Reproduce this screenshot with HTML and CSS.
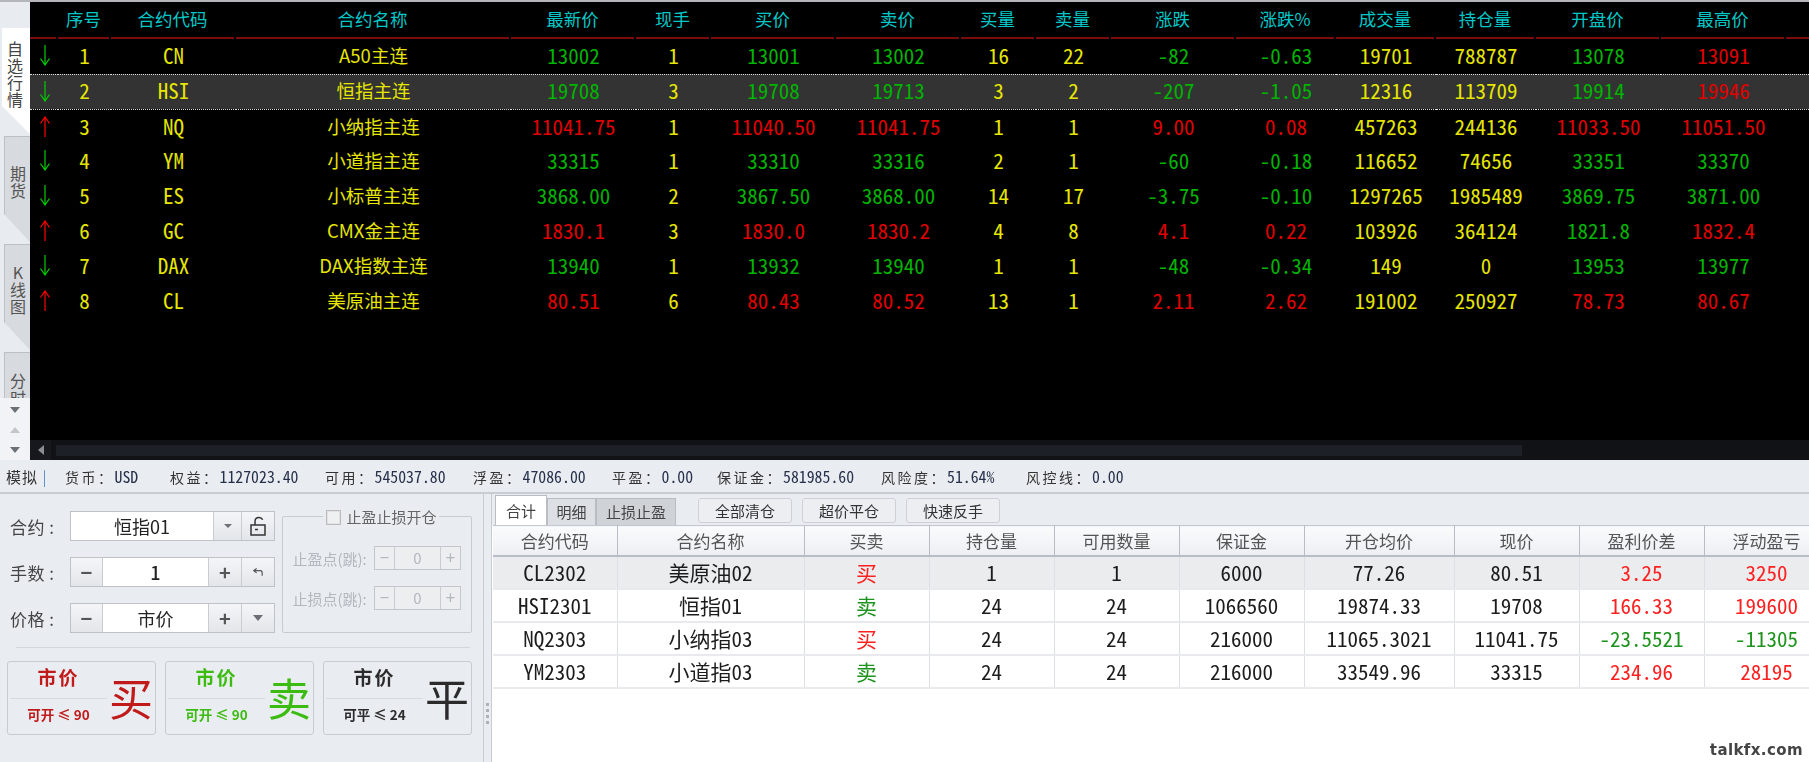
FILE: index.html
```html
<!DOCTYPE html>
<html lang="zh-CN">
<head>
<meta charset="utf-8">
<title>行情交易</title>
<link rel="stylesheet" href="styles.css">
</head>
<body>
<svg class="defs" width="0" height="0" aria-hidden="true">
  <symbol id="down" viewBox="0 0 12 21"><path d="M6 0v20M1.500 13.500l4.500 6.500 4.500-6.500" fill="none" stroke="currentColor" stroke-width="1.200"/></symbol>
  <symbol id="up" viewBox="0 0 12 21"><path d="M6 21V1M1.500 7.500L6 1l4.500 6.500" fill="none" stroke="currentColor" stroke-width="1.200"/></symbol>
</svg>
<div class="app">
  <section class="market">
    <nav class="side">
      <div class="side-tabs">
        <div class="tab active"><span>自选行情</span></div>
        <div class="tab"><span>期货</span></div>
        <div class="tab"><span>K线图</span></div>
        <div class="tab"><span>分时图</span></div>
      </div>
      <div class="side-arrows">
        <i class="tri"></i>
        <i class="tri up"></i>
        <i class="tri"></i>
      </div>
    </nav>
    <div class="quotes">
      <div class="quotes-view">
        <table class="qt">
          <colgroup>
            <col class="w28"><col class="w53"><col class="w125"><col class="w275"><col class="w125"><col class="w75"><col class="w125"><col class="w125"><col class="w75"><col class="w75"><col class="w125"><col class="w100"><col class="w100"><col class="w100"><col class="w125"><col class="w125"><col class="w125">
          </colgroup>
          <thead>
            <tr>
              <th><div></div></th><th><div>序号</div></th><th><div>合约代码</div></th><th><div>合约名称</div></th><th><div>最新价</div></th><th><div>现手</div></th><th><div>买价</div></th><th><div>卖价</div></th><th><div>买量</div></th><th><div>卖量</div></th><th><div>涨跌</div></th><th><div>涨跌%</div></th><th><div>成交量</div></th><th><div>持仓量</div></th><th><div>开盘价</div></th><th><div>最高价</div></th><th><div></div></th>
            </tr>
          </thead>
          <tbody>
            <tr><td class="g"><svg class="arr"><use href="#down"/></svg></td><td>1</td><td>CN</td><td class="nm">A50主连</td><td class="g">13002</td><td>1</td><td class="g">13001</td><td class="g">13002</td><td>16</td><td>22</td><td class="g">-82</td><td class="g">-0.63</td><td>19701</td><td>788787</td><td class="g">13078</td><td class="r">13091</td><td></td></tr>
            <tr class="sel"><td class="g"><svg class="arr"><use href="#down"/></svg></td><td>2</td><td>HSI</td><td class="nm">恒指主连</td><td class="g">19708</td><td>3</td><td class="g">19708</td><td class="g">19713</td><td>3</td><td>2</td><td class="g">-207</td><td class="g">-1.05</td><td>12316</td><td>113709</td><td class="g">19914</td><td class="r">19946</td><td></td></tr>
            <tr><td class="r"><svg class="arr"><use href="#up"/></svg></td><td>3</td><td>NQ</td><td class="nm">小纳指主连</td><td class="r">11041.75</td><td>1</td><td class="r">11040.50</td><td class="r">11041.75</td><td>1</td><td>1</td><td class="r">9.00</td><td class="r">0.08</td><td>457263</td><td>244136</td><td class="r">11033.50</td><td class="r">11051.50</td><td></td></tr>
            <tr><td class="g"><svg class="arr"><use href="#down"/></svg></td><td>4</td><td>YM</td><td class="nm">小道指主连</td><td class="g">33315</td><td>1</td><td class="g">33310</td><td class="g">33316</td><td>2</td><td>1</td><td class="g">-60</td><td class="g">-0.18</td><td>116652</td><td>74656</td><td class="g">33351</td><td class="g">33370</td><td></td></tr>
            <tr><td class="g"><svg class="arr"><use href="#down"/></svg></td><td>5</td><td>ES</td><td class="nm">小标普主连</td><td class="g">3868.00</td><td>2</td><td class="g">3867.50</td><td class="g">3868.00</td><td>14</td><td>17</td><td class="g">-3.75</td><td class="g">-0.10</td><td>1297265</td><td>1985489</td><td class="g">3869.75</td><td class="g">3871.00</td><td></td></tr>
            <tr><td class="r"><svg class="arr"><use href="#up"/></svg></td><td>6</td><td>GC</td><td class="nm">CMX金主连</td><td class="r">1830.1</td><td>3</td><td class="r">1830.0</td><td class="r">1830.2</td><td>4</td><td>8</td><td class="r">4.1</td><td class="r">0.22</td><td>103926</td><td>364124</td><td class="g">1821.8</td><td class="r">1832.4</td><td></td></tr>
            <tr><td class="g"><svg class="arr"><use href="#down"/></svg></td><td>7</td><td>DAX</td><td class="nm">DAX指数主连</td><td class="g">13940</td><td>1</td><td class="g">13932</td><td class="g">13940</td><td>1</td><td>1</td><td class="g">-48</td><td class="g">-0.34</td><td>149</td><td>0</td><td class="g">13953</td><td class="g">13977</td><td></td></tr>
            <tr><td class="r"><svg class="arr"><use href="#up"/></svg></td><td>8</td><td>CL</td><td class="nm">美原油主连</td><td class="r">80.51</td><td>6</td><td class="r">80.43</td><td class="r">80.52</td><td>13</td><td>1</td><td class="r">2.11</td><td class="r">2.62</td><td>191002</td><td>250927</td><td class="r">78.73</td><td class="r">80.67</td><td></td></tr>
          </tbody>
        </table>
      </div>
      <div class="hscroll">
        <div class="hs-btn"><i class="tri-left"></i></div>
        <div class="hs-track"><div class="hs-thumb"></div></div>
      </div>
    </div>
  </section>

  <div class="status">
    <span class="mode">模拟 <b>|</b></span>
    <span class="stat s-cur">货币：<em>USD</em></span>
    <span class="stat s-eq">权益：<em>1127023.40</em></span>
    <span class="stat s-av">可用：<em>545037.80</em></span>
    <span class="stat s-fl">浮盈：<em>47086.00</em></span>
    <span class="stat s-cl">平盈：<em>0.00</em></span>
    <span class="stat s-mg">保证金：<em>581985.60</em></span>
    <span class="stat s-rk">风险度：<em>51.64%</em></span>
    <span class="stat">风控线：<em>0.00</em></span>
  </div>

  <section class="lower">
    <aside class="order">
      <div class="order-top">
        <div class="form">
          <div class="frow">
            <label>合约 :</label>
            <div class="ctl">
              <div class="field f-name">恒指01</div>
              <div class="cbtn c28"><i class="tri small"></i></div>
              <div class="cbtn c33">
                <svg class="lock" viewBox="0 0 18 20"><path d="M2 9h14v10H2z M6 9V5.500C6 3 7.700 1.500 10 1.500c1.700 0 3 .8 3.700 2.300" fill="none" stroke="#333" stroke-width="1.500"/><path d="M6 13.500h3" stroke="#333" stroke-width="1.500"/></svg>
              </div>
            </div>
          </div>
          <div class="frow">
            <label>手数 :</label>
            <div class="ctl">
              <div class="cbtn c32 sign">−</div>
              <div class="field f-val strong">1</div>
              <div class="cbtn c33 sign">+</div>
              <div class="cbtn c33">
                <svg class="undo" viewBox="0 0 12 10"><path d="M4 1L1 3.500 4 6M1 3.500h7c1.500 0 2 1 2 2.500v3" fill="none" stroke="#555" stroke-width="1.300"/></svg>
              </div>
            </div>
          </div>
          <div class="frow">
            <label>价格 :</label>
            <div class="ctl">
              <div class="cbtn c32 sign">−</div>
              <div class="field f-val">市价</div>
              <div class="cbtn c33 sign">+</div>
              <div class="cbtn c33"><i class="tri"></i></div>
            </div>
          </div>
        </div>
        <div class="group">
          <div class="legend"><i class="check"></i>止盈止损开仓</div>
          <div class="grow">
            <span>止盈点(跳):</span>
            <div class="spin"><b>−</b><u>0</u><b>+</b></div>
          </div>
          <div class="grow">
            <span>止损点(跳):</span>
            <div class="spin"><b>−</b><u>0</u><b>+</b></div>
          </div>
        </div>
      </div>
      <hr class="rule">
      <div class="trades">
        <button class="trade t-buy" type="button">
          <span class="t-info"><strong>市价</strong><small>可开 ≤ 90</small></span><span class="t-big">买</span>
        </button>
        <button class="trade t-sell" type="button">
          <span class="t-info"><strong>市价</strong><small>可开 ≤ 90</small></span><span class="t-big">卖</span>
        </button>
        <button class="trade t-flat" type="button">
          <span class="t-info"><strong>市价</strong><small>可平 ≤ 24</small></span><span class="t-big">平</span>
        </button>
      </div>
    </aside>
    <div class="splitter"><i></i><i></i><i></i><i></i></div>
    <div class="positions">
      <div class="toolbar">
        <div class="ptabs">
          <span class="ptab on">合计</span>
          <span class="ptab">明细</span>
          <span class="ptab">止损止盈</span>
        </div>
        <div class="tools">
          <button class="tool" type="button">全部清仓</button>
          <button class="tool" type="button">超价平仓</button>
          <button class="tool" type="button">快速反手</button>
        </div>
      </div>
      <div class="pt-wrap">
        <table class="pt">
          <colgroup>
            <col class="w124"><col class="w187"><col class="w125"><col class="w125"><col class="w125"><col class="w125"><col class="w150"><col class="w125"><col class="w125"><col class="w125">
          </colgroup>
          <thead>
            <tr><th>合约代码</th><th>合约名称</th><th>买卖</th><th>持仓量</th><th>可用数量</th><th>保证金</th><th>开仓均价</th><th>现价</th><th>盈利价差</th><th>浮动盈亏</th></tr>
          </thead>
          <tbody>
            <tr class="cur"><td>CL2302</td><td>美原油02</td><td class="up">买</td><td>1</td><td>1</td><td>6000</td><td>77.26</td><td>80.51</td><td class="up">3.25</td><td class="up">3250</td></tr>
            <tr><td>HSI2301</td><td>恒指01</td><td class="dn">卖</td><td>24</td><td>24</td><td>1066560</td><td>19874.33</td><td>19708</td><td class="up">166.33</td><td class="up">199600</td></tr>
            <tr><td>NQ2303</td><td>小纳指03</td><td class="up">买</td><td>24</td><td>24</td><td>216000</td><td>11065.3021</td><td>11041.75</td><td class="dn">-23.5521</td><td class="dn">-11305</td></tr>
            <tr><td>YM2303</td><td>小道指03</td><td class="dn">卖</td><td>24</td><td>24</td><td>216000</td><td>33549.96</td><td>33315</td><td class="up">234.96</td><td class="up">28195</td></tr>
          </tbody>
        </table>
        <div class="mark">talkfx.com</div>
      </div>
    </div>
  </section>
</div>
</body>
</html>
```

FILE: styles.css
```css
* { box-sizing: border-box; }
html, body { margin: 0; height: 100%; }
body {
  font-family: "Noto Sans CJK SC", "Noto Sans", sans-serif;
  background: #e9ecf0;
  color: #222;
  overflow: hidden;
}
.defs { position: absolute; }
.app { width: 1809px; height: 762px; display: flex; flex-direction: column; overflow: hidden; filter: blur(.35px); }

/* market */
.market { height: 460px; display: flex; background: #000; }
.side {
  width: 30px;
  flex: none;
  background: #e8ebef;
  display: flex;
  flex-direction: column;
  border-top: 2px solid #b4b6ba;
}
.side-tabs {
  height: 396px;
  padding-top: 26px;
  overflow: hidden;
  display: flex;
  flex-direction: column;
  gap: 2px;
  flex: none;
}
.tab {
  flex: none;
  height: 106px;
  margin-left: 4px;
  background: #d7dade;
  border-left: 1px solid #bcbfc5;
  border-top: 1px solid #bcbfc5;
  color: #555;
  font-size: 16px;
  line-height: 1;
  padding: 0 0 14px 5px;
  display: flex;
  align-items: center;
  clip-path: polygon(0 0, 100% 0, 100% 100%, 0 78px);
}
.tab span {
  display: block;
  writing-mode: vertical-rl;
  text-orientation: upright;
  letter-spacing: 1px;
}
.tab.active {
  margin-left: 2px;
  background: #fff;
  border: 0;
  color: #444;
  padding: 0 0 12px 5px;
}
.side-arrows {
  flex: 1;
  background: #f1f3f6;
  display: flex;
  flex-direction: column;
  align-items: center;
  justify-content: space-around;
  padding: 2px 0 0;
}
.tri {
  display: block;
  width: 0;
  height: 0;
  border-left: 5px solid transparent;
  border-right: 5px solid transparent;
  border-top: 6px solid #6b6f76;
}
.tri.up { border-top: 0; border-bottom: 6px solid #c3c6cb; }
.tri.small { border-left-width: 4px; border-right-width: 4px; border-top-width: 4px; }

.quotes { flex: 1; min-width: 0; display: flex; flex-direction: column; }
.quotes-view { height: 440px; overflow: hidden; border-top: 2px solid #b4b6ba; }
.qt { border-collapse: collapse; table-layout: fixed; width: 1781px; color: #e6e600; }
.w28 { width: 28px; } .w53 { width: 53px; } .w75 { width: 75px; } .w100 { width: 100px; }
.w124 { width: 124px; } .w125 { width: 125px; } .w150 { width: 150px; } .w187 { width: 187px; } .w275 { width: 275px; }
.qt th { padding: 0; font-weight: 400; }
.qt th div {
  height: 37px;
  margin-right: 2px;
  border-bottom: 2px solid #7a0c0c;
  color: #00c8c8;
  font-size: 17.500px;
  line-height: 34px;
  text-align: center;
}
.qt td {
  height: 35px;
  padding: 0;
  font-family: "Noto Sans Mono CJK SC", "DejaVu Sans Mono", monospace;
  font-size: 21px;
  line-height: 32px;
  text-align: center;
  vertical-align: top;
  white-space: nowrap;
}
.qt td.nm { font-family: "Noto Sans CJK SC", sans-serif; font-size: 18.500px; line-height: 33px; }
.qt .g { color: #00b400; }
.qt .r { color: #e00000; }
.qt .sel td { background: #333; border-top: 1px dotted #ddd; border-bottom: 1px dotted #ddd; line-height: 31px; }
.arr { display: block; width: 12px; height: 21px; margin: 6px 0 0 9px; }
.qt td:first-child.g .arr { color: #00d000; }
.qt td:first-child.r .arr { color: #ff0000; }

.hscroll { height: 20px; display: flex; background: #101216; }
.hs-btn { width: 21px; background: #16181d; display: flex; align-items: center; justify-content: center; }
.tri-left {
  display: block;
  width: 0;
  height: 0;
  border-top: 5px solid transparent;
  border-bottom: 5px solid transparent;
  border-right: 6px solid #8a8d93;
}
.hs-track { flex: 1; padding: 5px 0 4px 5px; }
.hs-thumb { width: 1466px; height: 11px; background: #1e2028; }

/* status */
.status {
  height: 34px;
  flex: none;
  display: flex;
  align-items: center;
  padding-left: 6px;
  font-size: 14px;
  color: #333;
  background: #e9ecf0;
  border-bottom: 2px solid #c9cdd3;
  white-space: nowrap;
}
.mode { width: 59px; font-size: 15px; letter-spacing: 1px; }
.mode b { font-weight: 400; color: #5b8fc4; }
.stat { letter-spacing: 2.500px; }
.stat em { font-family: "Noto Sans Mono CJK SC", "DejaVu Sans Mono", monospace; font-size: 15.800px; font-style: normal; color: #26304a; letter-spacing: 0; }
.s-cur { width: 105px; }
.s-eq { width: 155px; }
.s-av { width: 148px; }
.s-fl { width: 139px; }
.s-cl { width: 105px; }
.s-mg { width: 164px; }
.s-rk { width: 145px; }

/* lower */
.lower { flex: 1; min-height: 0; display: flex; }
.order { width: 484px; flex: none; padding: 17px 11px 0 7px; border-right: 1px solid #c9cdd3; }
.order-top { display: flex; height: 122px; }
.form { width: 276px; display: flex; flex-direction: column; gap: 16px; padding-left: 3px; }
.frow { display: flex; align-items: center; height: 30px; }
.frow label { width: 60px; font-size: 17px; color: #444; letter-spacing: .5px; }
.ctl {
  width: 205px;
  height: 30px;
  display: flex;
  border: 1px solid #bfc3c9;
  background: #fff;
}
.field { display: flex; align-items: center; justify-content: center; font-size: 18px; color: #222; }
.f-name { flex: 1; }
.f-val { flex: 1; }
.strong { font-weight: 500; }
.cbtn {
  display: flex;
  align-items: center;
  justify-content: center;
  background: linear-gradient(#f4f5f7, #e3e6ea);
  border-left: 1px solid #c9cdd2;
  color: #555;
}
.c28 { width: 28px; }
.c32 { width: 32px; border-left: 0; border-right: 1px solid #c9cdd2; }
.c33 { width: 33px; }
.sign { font-size: 20px; font-weight: 700; line-height: 1; }
.lock { width: 18px; height: 20px; }
.undo { width: 11px; height: 10px; }

.group {
  position: relative;
  width: 190px;
  height: 117px;
  margin-top: 5px;
  border: 1px solid #c8ccd2;
  border-radius: 2px;
  padding: 29px 10px 0 9px;
  display: flex;
  flex-direction: column;
  gap: 16px;
}
.legend {
  position: absolute;
  top: -10px;
  left: 40px;
  display: flex;
  align-items: center;
  gap: 5px;
  padding: 0 3px;
  background: #e9ecf0;
  font-size: 15px;
  line-height: 20px;
  color: #666;
}
.check { width: 15px; height: 15px; border: 1px solid #bbb; background: #eef0f2; box-shadow: inset 0 0 0 1px #e0e2e6; }
.grow { display: flex; align-items: center; justify-content: space-between; height: 24px; font-size: 15px; color: #b4b8be; white-space: nowrap; }
.spin { width: 87px; height: 24px; display: flex; border: 1px solid #c3c7cc; background: #eceeef; color: #b4b8be; }
.spin b { width: 20px; text-align: center; font-weight: 400; font-size: 17px; line-height: 20px; }
.spin b:first-child { border-right: 1px solid #c9cdd2; }
.spin b:last-child { border-left: 1px solid #c9cdd2; }
.spin u { flex: 1; text-align: center; text-decoration: none; font-size: 15px; line-height: 21px; }

.rule { height: 1px; margin: 14px 2px 13px 9px; border: 0; background: #d3d6db; }
.trades { display: flex; gap: 9px; }
.trade {
  width: 149px;
  height: 74px;
  padding: 0;
  display: flex;
  border: 1px solid #c8ccd2;
  border-radius: 3px;
  background: #e9ecf0;
  font-family: inherit;
  text-align: left;
}
.t-info { width: 97px; margin-left: 2px; display: flex; flex-direction: column; align-items: center; flex: none; }
.t-info strong {
  width: 100%;
  height: 37px;
  padding-top: 1px;
  border-bottom: 1px solid #d7dade;
  font-size: 19px;
  line-height: 28px;
  text-align: center;
  letter-spacing: 2px;
}
.t-info small { font-size: 13.500px; font-weight: 700; line-height: 30px; }
.t-big { font-size: 44px; line-height: 70px; width: 44px; margin-left: 2px; text-align: center; flex: none; }
.t-buy { color: #c11a1a; }
.t-sell { color: #3cbc10; }
.t-flat { color: #2b2b2b; }

.splitter { width: 8px; flex: none; border-right: 1px solid #c9cdd3; display: flex; flex-direction: column; align-items: center; justify-content: flex-start; gap: 3px; padding-top: 209px; }
.splitter i { width: 3px; height: 3px; background: #aeb2b8; }

.positions { flex: 1; min-width: 0; display: flex; flex-direction: column; }
.toolbar { height: 31px; display: flex; flex: none; padding-left: 3px; }
.ptabs { display: flex; align-items: flex-end; width: 203px; font-size: 15px; flex: none; }
.ptab {
  height: 27px;
  padding: 0 6px;
  line-height: 26px;
  background: #cfd2d7;
  color: #444;
  border: 1px solid #b8bcc3;
  border-bottom: 0;
  text-align: center;
  white-space: nowrap;
}
.ptab:nth-child(1) { width: 52px; height: 30px; background: #fff; line-height: 30px; }
.ptab:nth-child(2) { width: 49px; background: #dcdfe3; }
.ptab:nth-child(3) { width: 80px; }
.tools { display: flex; gap: 10px; padding-top: 4px; }
.tool {
  width: 94px;
  height: 25px;
  padding: 0;
  border: 1px solid #cdd1d7;
  border-radius: 3px;
  background: #eceef1;
  font-family: inherit;
  font-size: 15px;
  line-height: 22px;
  color: #333;
}
.pt-wrap { position: relative; flex: 1; min-height: 0; background: #fff; overflow: hidden; padding-left: 1px; }
.pt { border-collapse: collapse; table-layout: fixed; width: 1336px; }
.pt th {
  height: 30px;
  padding: 0;
  font-size: 17px;
  font-weight: 400;
  color: #555;
  background: linear-gradient(#fafbfc, #edeff3);
  border-top: 1px solid #c3c7cf;
  border-right: 1px solid #b9bdc7;
  border-bottom: 2px solid #b9bdc7;
}
.pt td {
  height: 33px;
  padding: 0;
  font-family: "Noto Sans Mono CJK SC", "DejaVu Sans Mono", monospace;
  font-size: 21px;
  text-align: center;
  color: #1c1c1c;
  border-right: 1px solid #dcdfe4;
  border-bottom: 2px solid #e8eaee;
  white-space: nowrap;
}
.pt .cur td { background: #ebecee; }
.pt td.up { color: #ff2020; }
.pt td.dn { color: #1e931e; }
.mark {
  position: absolute;
  right: 6px;
  bottom: 3px;
  font-family: "DejaVu Sans", sans-serif;
  font-size: 15px;
  font-weight: 700;
  letter-spacing: .4px;
  color: #444;
}
```
